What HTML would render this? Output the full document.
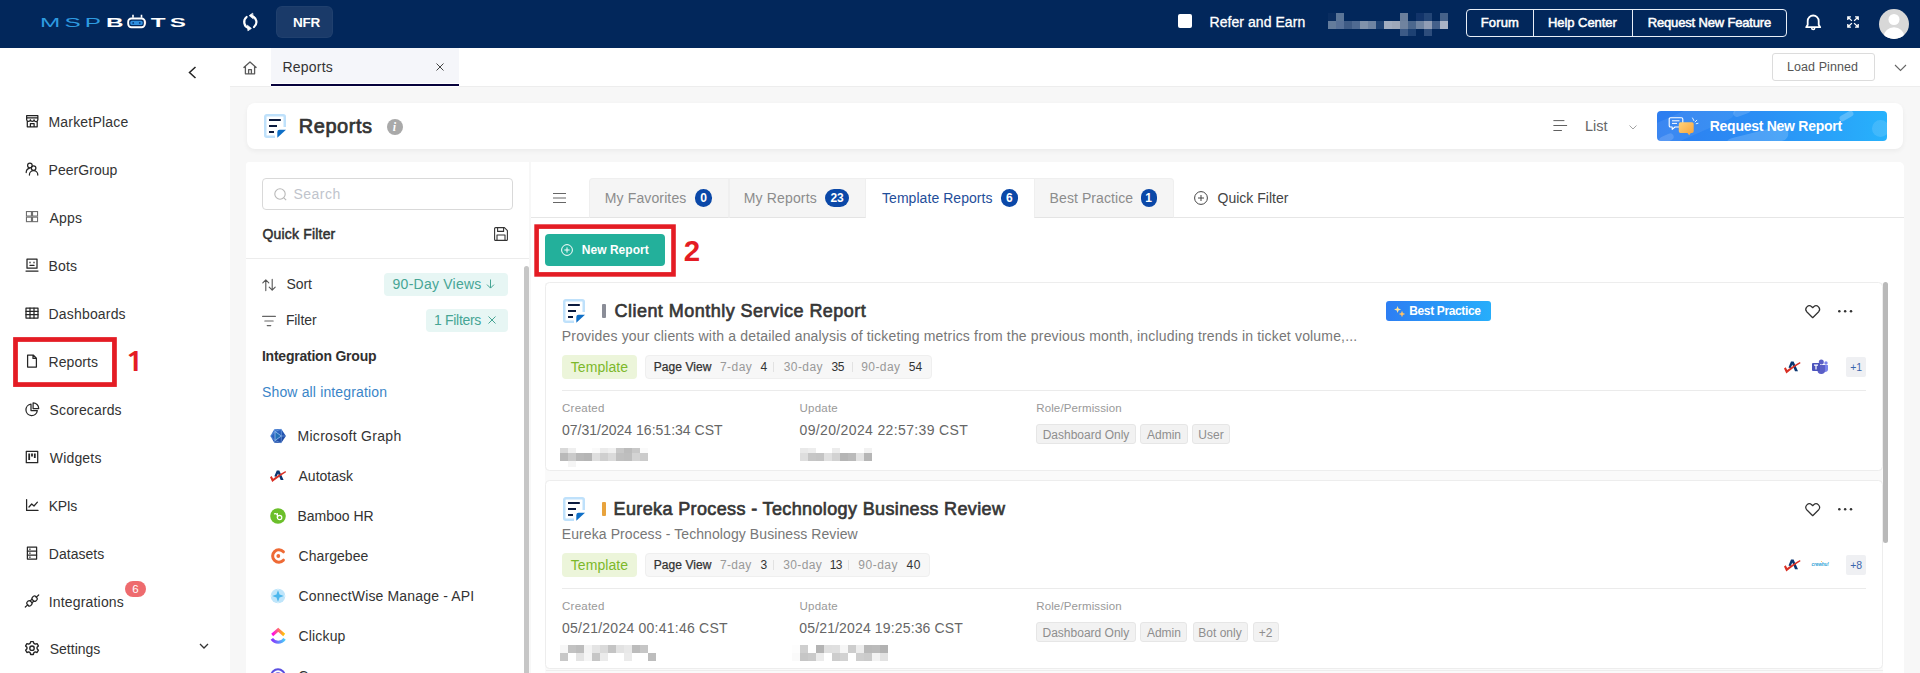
<!DOCTYPE html>
<html lang="en">
<head>
<meta charset="utf-8">
<title>Reports - MSPbots</title>
<style>
*{box-sizing:border-box;margin:0;padding:0}
html,body{width:1920px;height:673px;overflow:hidden;background:#f7f7f7;font-family:"Liberation Sans",sans-serif;color:#333}
.a{position:absolute}
.t{position:absolute;white-space:nowrap;line-height:20px;font-size:14px}
svg{display:block;overflow:visible}
/* top bar */
#top{left:0;top:0;width:1920px;height:48px;background:#02275b}
#top .t{color:#fff}
/* sidebar */
#side{left:0;top:48px;width:230px;height:625px;background:#fff}
#side .t{left:49px;color:#333;font-size:14px}
#side svg{position:absolute;left:25px}
/* tab bar */
#tabs{left:230px;top:48px;width:1690px;height:39px;background:#fff;border-bottom:1px solid #ededed}
/* title card */
#tcard{left:247px;top:103px;width:1656px;height:46px;background:#fff;border-radius:8px;box-shadow:0 2px 5px rgba(0,0,0,.05)}
/* filter panel */
#filter{left:246px;top:162px;width:283px;height:511px;background:#fff;border-radius:3px 0 0 0;overflow:hidden}
/* main panel */
#main{left:531px;top:162px;width:1373px;height:511px;background:#fff;border-radius:0 5px 0 0;overflow:hidden}

.card{background:#fff;border:1px solid #ededed;border-radius:4.500px}
.pv{font-size:12px}
.lb{font-size:11.500px;color:#999}
.dt{font-size:14px;color:#666}
.tg{height:19.500px;border-radius:3px;background:#f2f2f2;border:1px solid #e6e6e6}
.tgt{font-size:12px;color:#8e8e8e;text-align:center}
.mz i{position:absolute;width:8px;display:block}
</style>
</head>
<body>

<!-- ================= TOP BAR ================= -->
<div id="top" class="a">
  
  <div class="t" id="lg1" style="left:40.300px;top:13.400px;font-size:13.5px;color:#2e9be0;letter-spacing:2.3px;transform-origin:0 50%;transform:scaleX(1.8)">MSP</div>
  <div class="t" id="lg2" style="left:105.500px;top:13.400px;font-size:13.5px;font-weight:bold;color:#fff;letter-spacing:2.3px;transform-origin:0 50%;transform:scaleX(1.8)">BOTS</div>
  <svg class="a" style="left:126px;top:14px" width="21" height="15" viewBox="0 0 21 15"><path d="M7 .800v3M15.500.800v3" stroke="#fff" stroke-width="1.600" fill="none"/><rect x="2.200" y="4.500" width="16.600" height="8.800" rx="3.200" fill="#02275b" stroke="#fff" stroke-width="1.900"/><rect x="4.300" y="6.800" width="12.400" height="4.200" rx="1.600" fill="#2f8fdf"/><circle cx="7.200" cy="8.900" r=".9" fill="#0b3a7a"/><circle cx="13.800" cy="8.900" r=".9" fill="#0b3a7a"/></svg>

  
  <svg class="a" style="left:242px;top:13px" width="17" height="18" viewBox="0 0 17 18" fill="none" stroke="#fff" stroke-width="2.200" stroke-linecap="round">
    <path d="M4.600 4A6.300 6.300 0 0 0 6.800 15"/><path d="M5.600 12.400 9.400 15.400 6.200 17.600z" fill="#fff" stroke-width=".8" stroke-linejoin="round"/>
    <path d="M12 14A6.300 6.300 0 0 0 9.800 3"/><path d="M11 5.600 7.200 2.600 10.400.400z" fill="#fff" stroke-width=".8" stroke-linejoin="round"/>
  </svg>
  <div class="a" style="left:276px;top:6px;width:57px;height:32px;background:#1a3a69;border:1px solid #25447199;border-radius:6px"></div>
  <div class="t" id="nfr" style="left:293.00px;top:12.5px;font-weight:bold;font-size:13.5px;letter-spacing:-0.248px">NFR</div>

  
  <div class="a" style="left:1178px;top:14px;width:14px;height:14px;background:#fff;border-radius:2px"></div>
  <div class="t" id="refer" style="left:1209.60px;top:12px;font-size:14px;-webkit-text-stroke:.3px #fff;letter-spacing:0.049px">Refer and Earn</div>
  <div class="mz"><i style="left:1328px;top:13px;height:8px;background:#0a2d60"></i><i style="left:1336px;top:13px;height:8px;background:#5b7597"></i><i style="left:1400px;top:13px;height:8px;background:#6b7f9c"></i><i style="left:1416px;top:13px;height:8px;background:#12346a"></i><i style="left:1424px;top:13px;height:8px;background:#234576"></i><i style="left:1440px;top:13px;height:8px;background:#46628a"></i><i style="left:1328px;top:21px;height:8px;background:#647c9c"></i><i style="left:1336px;top:21px;height:8px;background:#587198"></i><i style="left:1344px;top:21px;height:8px;background:#3f5b85"></i><i style="left:1352px;top:21px;height:8px;background:#4f6a92"></i><i style="left:1360px;top:21px;height:8px;background:#8092ab"></i><i style="left:1368px;top:21px;height:8px;background:#6f84a2"></i><i style="left:1376px;top:21px;height:8px;background:#1d4173"></i><i style="left:1384px;top:21px;height:8px;background:#a2adc0"></i><i style="left:1392px;top:21px;height:8px;background:#9ea8ba"></i><i style="left:1400px;top:21px;height:8px;background:#70839f"></i><i style="left:1408px;top:21px;height:8px;background:#4b678d"></i><i style="left:1416px;top:21px;height:8px;background:#6f84a2"></i><i style="left:1424px;top:21px;height:8px;background:#909db5"></i><i style="left:1432px;top:21px;height:8px;background:#44608a"></i><i style="left:1440px;top:21px;height:8px;background:#a9b3c6"></i><i style="left:1400px;top:29px;height:7px;background:#3c5a86"></i><i style="left:1408px;top:29px;height:7px;background:#1d4173"></i><i style="left:1424px;top:29px;height:7px;background:#2d4d7c"></i></div>
  <div class="a" style="left:1466px;top:9px;width:321px;height:28px;border:1px solid #e8eef7;border-radius:4px"></div>
  <div class="a" style="left:1533px;top:9px;width:1px;height:28px;background:#e8eef7"></div>
  <div class="a" style="left:1632px;top:9px;width:1px;height:28px;background:#e8eef7"></div>
  <div class="t" id="forum" style="left:1480.75px;top:13px;font-size:13px;-webkit-text-stroke-width:.5px;letter-spacing:0.130px">Forum</div>
  <div class="t" id="help" style="left:1548.00px;top:13px;font-size:13px;-webkit-text-stroke-width:.5px;letter-spacing:-0.054px">Help Center</div>
  <div class="t" id="reqf" style="left:1647.75px;top:13px;font-size:13px;-webkit-text-stroke-width:.5px;letter-spacing:-0.165px">Request New Feature</div>
  <svg class="a" style="left:1804px;top:13px" width="18" height="18" viewBox="0 0 18 18" fill="none" stroke="#fff" stroke-width="1.800" stroke-linecap="round" stroke-linejoin="round">
    <path d="M2.200 14.200h14l-1.500-2.500V8a5.500 5.500 0 0 0-11 0v3.700z"/><path d="M7.700 15a1.500 1.500 0 0 0 3 0" stroke-width="1.500"/>
  </svg>
  <svg class="a" style="left:1847px;top:16.200px" width="12" height="12" viewBox="0 0 12 12" fill="none" stroke="#fff" stroke-width="1.300" stroke-linecap="square" stroke-linejoin="miter">
    <path d="M4.400 4.400 1.200 1.200M.800 3.300V.800h2.500M7.600 4.400l3.200-3.200M8.700.800h2.500v2.500M4.400 7.600 1.200 10.800M.800 8.700v2.500h2.500M7.600 7.600l3.200 3.200M11.200 8.700v2.500H8.700"/>
  </svg>
  <svg class="a" style="left:1879px;top:9px" width="30" height="30" viewBox="0 0 30 30"><defs><clipPath id="avc"><circle cx="15" cy="15" r="15"/></clipPath></defs>
    <circle cx="15" cy="15" r="15" fill="#d8d8d8"/><g clip-path="url(#avc)" fill="#fff"><circle cx="15" cy="10.500" r="5.500"/><ellipse cx="15" cy="27.300" rx="10.200" ry="9"/></g>
  </svg>

</div>

<!-- ================= SIDEBAR ================= -->
<div id="side" class="a">
    <svg style="top:66.900px;left:25.800px" width="12.500" height="12.500" viewBox="0 0 12.500 12.500"><g fill="none" stroke="#222" stroke-width="1.250" stroke-linejoin="round"><path d="M.650.650h11.200v2.300H.650zM.650 2.950v1.800a1.870 1.870 0 0 0 3.730 0 1.870 1.870 0 0 0 3.730 0 1.870 1.870 0 0 0 3.740 0V2.950M1.300 6.500v5.350h9.900V6.500M4.400 11.850V8.600h3.700v3.250"/></g></svg><div class="t" id="s_MarketPlace" style="left:48.50px;top:64px;letter-spacing:0.188px">MarketPlace</div>
  <svg style="top:114.4px" width="14" height="14" viewBox="0 0 14 14"><g fill="none" stroke="#262626" stroke-width="1.250" stroke-linejoin="round" stroke-linecap="round"><circle cx="4.900" cy="3.500" r="2.300"/><circle cx="8.600" cy="6.100" r="2.300"/><path d="M4.400 13a4.200 4.300 0 0 1 8.400 0"/><path d="M1.200 10.500a3.900 4.200 0 0 1 3.100-4.100"/></g></svg><div class="t" id="s_PeerGroup" style="left:48.50px;top:112px;letter-spacing:0.050px">PeerGroup</div>
  <svg style="top:162.4px" width="14" height="14" viewBox="0 0 14 14"><g fill="none" stroke="#6e6e6e" stroke-width="1.100"><rect x="1.450" y="1.550" width="5" height="4.500"/><rect x="7.550" y="1.550" width="5" height="4.500"/><rect x="1.450" y="7.150" width="5" height="4.500"/><rect x="7.550" y="7.150" width="5" height="4.500"/></g></svg><div class="t" id="s_Apps" style="left:49.40px;top:160px;letter-spacing:0.230px">Apps</div>
  <svg style="top:210.4px" width="14" height="14" viewBox="0 0 14 14"><g fill="none" stroke="#262626" stroke-width="1.250" stroke-linejoin="round" stroke-linecap="round"><rect x="2" y="1" width="10" height="9.200"/><path d="M1 13h12M5 4.200v.6M9 4.200v.6M5 7.400h4"/></g></svg><div class="t" id="s_Bots" style="left:48.60px;top:208px;letter-spacing:0.095px">Bots</div>
  <svg style="top:258.4px" width="14" height="14" viewBox="0 0 14 14"><g fill="none" stroke="#262626" stroke-width="1.250" stroke-linejoin="round" stroke-linecap="round"><rect x="1" y="2" width="12" height="10"/><path d="M1 5.300h12M1 8.700h12M5 2v10M9 2v10"/></g></svg><div class="t" id="s_Dashboards" style="left:48.60px;top:256px;letter-spacing:0.168px">Dashboards</div>
  <svg style="top:306.4px" width="14" height="14" viewBox="0 0 14 14"><g fill="none" stroke="#262626" stroke-width="1.250" stroke-linejoin="round" stroke-linecap="round"><path d="M2.600 1h5.600l3.200 3.200V13H2.600zM8 1.200v3.200h3.200"/></g></svg><div class="t" id="s_Reports" style="left:48.60px;top:304px;letter-spacing:0.063px">Reports</div>
  <svg style="top:354.4px" width="14" height="14" viewBox="0 0 14 14"><g fill="none" stroke="#262626" stroke-width="1.250" stroke-linejoin="round" stroke-linecap="round"><path d="M6 2.200A5.700 5.700 0 1 0 12.300 8.600H6z"/><path d="M8.100.900v5.600H13.700A5.600 5.600 0 0 0 8.100.900z"/></g></svg><div class="t" id="s_Scorecards" style="left:49.60px;top:352px;letter-spacing:0.133px">Scorecards</div>
  <svg style="top:402.4px" width="14" height="14" viewBox="0 0 14 14"><g fill="none" stroke="#262626" stroke-width="1.250" stroke-linejoin="round" stroke-linecap="round"><rect x="1.300" y="1.300" width="11.400" height="11.400"/><path d="M4.200 3.600v6.400M7 3.600v2.800M9.800 3.600v4.400" stroke-width="1.800" stroke-linecap="butt"/></g></svg><div class="t" id="s_Widgets" style="left:49.75px;top:400px;letter-spacing:0.180px">Widgets</div>
  <svg style="top:450.4px" width="14" height="14" viewBox="0 0 14 14"><g fill="none" stroke="#262626" stroke-width="1.250" stroke-linejoin="round" stroke-linecap="round"><path d="M1.600 1.600v10.800h11.400M4 9l2.700-3 2.300 2 3.400-3.800"/></g></svg><div class="t" id="s_KPIs" style="left:48.75px;top:448px;letter-spacing:-0.372px">KPIs</div>
  <svg style="top:498.4px" width="14" height="14" viewBox="0 0 14 14"><g fill="none" stroke="#262626" stroke-width="1.250" stroke-linejoin="round" stroke-linecap="round"><rect x="2.400" y="1" width="9.200" height="12"/><path d="M2.400 5h9.200M2.400 9h9.200M4.600 3h.6M4.600 7h.6M4.600 11h.6"/></g></svg><div class="t" id="s_Datasets" style="left:48.75px;top:496px;letter-spacing:0.043px">Datasets</div>
  <svg style="top:546.4px" width="14" height="14" viewBox="0 0 14 14"><g fill="none" stroke="#262626" stroke-width="1.250" stroke-linejoin="round" stroke-linecap="round"><g transform="rotate(-42 7 7)"><path d="M-2 7h3.200M12.800 7H16M5.800 5.700h2.400M5.800 8.300h2.400"/><rect x="1.200" y="4.500" width="4.600" height="5" rx="1.700"/><rect x="8.200" y="4.500" width="4.600" height="5" rx="1.700"/></g></g></svg><div class="t" id="s_Integrations" style="left:48.75px;top:544px;letter-spacing:0.172px">Integrations</div>
  <svg style="top:593.4px" width="14" height="14" viewBox="0 0 14 14"><g fill="none" stroke="#262626" stroke-width="1.250" stroke-linejoin="round" stroke-linecap="round"><g transform="translate(7 7.200) scale(1.1) translate(-7 -7)"><circle cx="7" cy="7" r="2"/><path d="M5.800 1h2.400l.5 1.600 1.300.7 1.600-.5 1.200 2.100-1.200 1.200v1.500l1.200 1.200-1.200 2.100-1.600-.5-1.300.7-.5 1.600H5.800l-.5-1.600-1.300-.7-1.600.5-1.200-2.100 1.200-1.200V6.100L1.200 4.900l1.200-2.100 1.600.5 1.300-.7z"/></g></g></svg><div class="t" id="s_Settings" style="left:49.75px;top:591px;letter-spacing:-0.005px">Settings</div>
  <svg style="left:188px;top:18px" width="9" height="13" viewBox="0 0 9 13" fill="none" stroke="#222" stroke-width="1.500"><path d="M7.500 1 1.500 6.500l6 5.500"/></svg>
  <svg style="left:199px;top:595px" width="10" height="7" viewBox="0 0 10 7" fill="none" stroke="#333" stroke-width="1.300"><path d="M1 1l4 4 4-4"/></svg>
  <div class="a" style="left:125px;top:533px;width:21px;height:16px;border-radius:8px;background:#ee6b6e"></div>
  <div class="t" style="left:125px;top:531px;width:21px;text-align:center;color:#fff;font-size:11.500px">6</div>

</div>

<!-- ================= TAB BAR ================= -->
<div id="tabs" class="a">
  
  <svg class="a" style="left:12px;top:12.400px" width="16" height="16" viewBox="0 0 16 16" fill="none" stroke="#5a5a5a" stroke-width="1.300" stroke-linejoin="round"><path d="M1.500 7.800 8 2l6.500 5.800M3.400 6.500v7.300h9.200V6.500M6.600 13.800V9.600h2.800v4.200"/></svg>
  <div class="a" style="left:41px;top:0;width:188px;height:35px;background:#f5f6fa"></div><div class="a" style="left:41px;top:36px;width:188px;height:2px;background:#07023c"></div><div class="a" style="left:41px;top:38px;width:188px;height:1px;background:#fff"></div>
  <div class="t" id="tabrep" style="left:52.40px;top:9px;font-size:14px;color:#333;letter-spacing:0.222px">Reports</div>
  <svg class="a" style="left:206px;top:15px" width="8" height="8" viewBox="0 0 8 8" fill="none" stroke="#444" stroke-width="1"><path d="M.500.500l7 7M7.500.500l-7 7"/></svg>
  <div class="a" style="left:1542px;top:5px;width:103px;height:28px;border:1px solid #dcdcdc;border-radius:3px;background:#fff"></div>
  <div class="t" id="loadp" style="left:1557.00px;top:9px;font-size:12.500px;color:#555;letter-spacing:0.075px">Load Pinned</div>
  <svg class="a" style="left:1664px;top:16px" width="13" height="8" viewBox="0 0 13 8" fill="none" stroke="#666" stroke-width="1.100"><path d="M1 1l5.500 5.500L12 1"/></svg>

</div>

<!-- ================= TITLE CARD ================= -->
<div id="tcard" class="a">
  
  <svg class="a" style="left:17px;top:11px" width="22" height="24" viewBox="0 0 22 24"><path d="M11 22.750H2.750a1.500 1.500 0 0 1-1.500-1.500V2.750a1.500 1.500 0 0 1 1.500-1.500h16.500a1.500 1.500 0 0 1 1.500 1.500V13" fill="none" stroke="#bfe1fb" stroke-width="2.500"/><path d="M5 6h11.800M5 12h8M5 18h5" stroke="#0b1b3f" stroke-width="2.200" fill="none"/><path d="M13.300 23.800V18a2.200 2.200 0 0 1 2.200-2.200H22z" fill="#0f6fc7"/></svg>
  <div class="t" id="ttl" style="left:51.80px;top:8px;font-size:20px;line-height:30px;color:#333;-webkit-text-stroke-width:.7px;letter-spacing:0.528px">Reports</div>
  <div class="a" style="left:139.500px;top:15.500px;width:16px;height:16px;border-radius:8px;background:#a9a9a9"></div>
  <div class="t" style="left:139.500px;top:13.500px;width:16px;text-align:center;font-family:'Liberation Serif',serif;font-style:italic;font-weight:bold;font-size:12px;color:#fff">i</div>
  <svg class="a" style="left:1306px;top:17px" width="14" height="12" viewBox="0 0 14 12" fill="none" stroke="#606060" stroke-width="1"><path d="M.400.600h11M.400 5.500h13.700M.400 10.500h8.500"/></svg>
  <div class="t" id="list" style="left:1338.00px;top:13px;font-size:14.500px;color:#666;letter-spacing:-0.012px">List</div>
  <svg class="a" style="left:1382px;top:21.600px" width="8" height="5" viewBox="0 0 8 5" fill="none" stroke="#999" stroke-width=".9"><path d="M.500.500 4 4 7.500.500"/></svg>
  <div class="a" style="left:1410px;top:8px;width:230px;height:30px;border-radius:4px;background:linear-gradient(90deg,#2d7df0 0%,#2b8ff5 45%,#27b2fc 100%);overflow:hidden">
    <div class="a" style="left:-14px;top:-2px;width:96px;height:26px;border-radius:13px;background:rgba(255,255,255,.07);transform:rotate(-24deg)"></div>
    <div class="a" style="left:68px;top:21px;width:64px;height:15px;border-radius:8px;background:rgba(255,255,255,.17);transform:rotate(-14deg)"></div>
    <div class="a" style="left:76px;top:-3px;width:18px;height:7px;border-radius:4px;background:rgba(255,255,255,.16);transform:rotate(-20deg)"></div>
    <div class="a" style="left:182px;top:2px;width:15px;height:6px;border-radius:3px;background:rgba(255,255,255,.24);transform:rotate(-30deg)"></div>
    <div class="a" style="left:215px;top:9px;width:17px;height:17px;border-radius:9px;background:rgba(255,255,255,.12)"></div>
    <div class="a" style="left:2px;top:24px;width:15px;height:7px;border-radius:4px;background:rgba(255,255,255,.15);transform:rotate(-25deg)"></div>
  </div>
  <svg class="a" style="left:1421px;top:13px" width="32" height="21" viewBox="0 0 32 21">
    <defs><linearGradient id="og" x1="0" y1="0" x2="1" y2="1"><stop offset="0" stop-color="#ffd27a"/><stop offset="1" stop-color="#f7a23a"/></linearGradient></defs>
    <path d="M2.500 1.800h11a1.300 1.300 0 0 1 1.300 1.300v6.600a1.300 1.300 0 0 1-1.300 1.300H7l-2.800 2.300V11H2.500a1.300 1.300 0 0 1-1.300-1.300V3.100a1.300 1.300 0 0 1 1.300-1.300z" fill="none" stroke="#fff" stroke-width="1.100" stroke-linejoin="round"/>
    <path d="M4 4.800h7.500M4 7.400h5" stroke="#fff" stroke-width="1" fill="none"/>
    <path d="M12.500 6.300h11.500a1.700 1.700 0 0 1 1.700 1.700v7.300a1.700 1.700 0 0 1-1.700 1.700h-1.200l-1.600 2.200-1.800-2.200h-6.900a1.700 1.700 0 0 1-1.700-1.700V8a1.700 1.700 0 0 1 1.700-1.700z" fill="url(#og)"/>
    <path d="M24.500 2l1.400 2.600M28.800 4.200l-1.700 1.700M30 7.300l-1.800.4" stroke="#dff1ff" stroke-width="1" stroke-linecap="round" fill="none"/>
  </svg>
  <div class="t" id="reqr" style="left:1462.75px;top:13px;font-size:14px;font-weight:bold;color:#fff;letter-spacing:-0.265px">Request New Report</div>

</div>

<!-- ================= FILTER PANEL ================= -->
<div id="filter" class="a">
  
  <div class="a" style="left:16px;top:16px;width:251px;height:32px;border:1px solid #d9d9d9;border-radius:4px"></div>
  <svg class="a" style="left:27.5px;top:25.5px" width="13" height="13" viewBox="0 0 13 13" fill="none" stroke="#b8b8b8" stroke-width="1.100"><circle cx="6" cy="6" r="5.200"/><path d="M9.800 9.800l2.400 2.400"/></svg>
  <div class="t" id="srch" style="left:47.40px;top:22px;color:#c0c4cc;letter-spacing:0.486px">Search</div>
  <div class="t" id="qf" style="left:16.50px;top:62px;color:#303030;-webkit-text-stroke-width:.5px;letter-spacing:0.180px">Quick Filter</div>
  <svg class="a" style="left:248px;top:65px" width="14" height="14" viewBox="0 0 14 14" fill="none" stroke="#333" stroke-width="1.100" stroke-linejoin="round"><path d="M1.600.600h8.800l3 3v8.800a1 1 0 0 1-1 1H1.600a1 1 0 0 1-1-1V1.600a1 1 0 0 1 1-1z"/><path d="M3.600.800v3.600h6V.800M3 13.200V8h8v5.200"/></svg>
  <div class="a" style="left:0;top:96px;width:283px;height:1px;background:#ececec"></div>
  <div class="a" style="left:278px;top:104px;width:5px;height:420px;background:#c6c6c6;border-radius:3px 3px 0 0"></div>

  <svg class="a" style="left:16px;top:115.5px" width="14" height="14" viewBox="0 0 14 14" fill="none" stroke="#555" stroke-width="1.100" stroke-linecap="round" stroke-linejoin="round"><path d="M3.800 12.600V1.800M.800 4.800l3-3 3 3M10.200 1.400v10.800M7.200 9.200l3 3 3-3"/></svg>
  <div class="t" id="sort" style="left:40.40px;top:112px;color:#333;letter-spacing:-0.062px">Sort</div>
  <div class="a" style="left:138px;top:110.5px;width:124px;height:23px;border-radius:4px;background:#e7f6f4"></div>
  <div class="t" id="v90" style="left:146.60px;top:112px;color:#46a594;letter-spacing:0.235px">90-Day Views</div>
  <svg class="a" style="left:240px;top:117px" width="9" height="10" viewBox="0 0 9 10" fill="none" stroke="#46a594" stroke-width="1"><path d="M4.500.500v8.500M1 5.600l3.500 3.500L8 5.600"/></svg>

  <svg class="a" style="left:16px;top:152.5px" width="14" height="12" viewBox="0 0 14 12" fill="none" stroke="#666" stroke-width="1.100" stroke-linecap="round"><path d="M.600 1.400h12.800M2.800 6h8.400M5.200 10.600h3.600"/></svg>
  <div class="t" id="filt" style="left:39.90px;top:148px;color:#333;letter-spacing:-0.090px">Filter</div>
  <div class="a" style="left:180px;top:146.5px;width:82px;height:23px;border-radius:4px;background:#e7f6f4"></div>
  <div class="t" id="f1" style="left:188.00px;top:148px;color:#46a594;letter-spacing:-0.311px">1 Filters</div>
  <svg class="a" style="left:241.5px;top:154px" width="8" height="8" viewBox="0 0 8 8" fill="none" stroke="#46a594" stroke-width="1"><path d="M.500.500l7 7M7.500.500l-7 7"/></svg>

  <div class="t" id="ig" style="left:15.90px;top:184px;font-weight:bold;color:#303030;letter-spacing:-0.223px">Integration Group</div>
  <div class="t" id="sai" style="left:16.00px;top:220px;color:#3a85c8;letter-spacing:0.147px">Show all integration</div>
  <svg class="a" style="left:24px;top:266px" width="16" height="16" viewBox="0 0 16 16"><defs><linearGradient id="msg" x1="0" y1="0" x2="1" y2="1"><stop offset="0" stop-color="#3f7fd8"/><stop offset=".5" stop-color="#2458b5"/><stop offset="1" stop-color="#1c3f94"/></linearGradient></defs><path d="M.400 8.100 4.300 1.200l7-.2L15.900 8l-4.700 7-6.900-.2z" fill="url(#msg)"/><path d="M5 3.500 11.400 8 5 12.500z" fill="#2471b8" stroke="#a9cdf7" stroke-width=".7" stroke-linejoin="round"/><path d="M5 3.500 4.300 1.200M5 3.500.400 8.100 5 12.500l-.7 2.300M5 12.500l6.200 2.500L11.400 8l4.500 0M11.400 8l-.1-7L5 3.500" stroke="#8db8ee" stroke-width=".5" fill="none"/></svg><div class="t" id="i0" style="left:51.50px;top:264px;color:#333;letter-spacing:0.293px">Microsoft Graph</div>
  <svg class="a" style="left:24px;top:306px" width="16" height="16" viewBox="0 0 16 16"><g transform="translate(0,2) scale(.97)"><path d="M4.500 6.500 7 .500h2.600L14 10.300h-3L8.300 3.600 6.600 7.300z" fill="#0a3570"/><path d="M0 7.600l1.700-1.300 1.500 2.800C7.500 6 11.800 3.200 16 1.100l.5 1.100C11.800 5.100 6.800 8.700 2.300 12.400z" fill="#d93025"/></g></svg><div class="t" id="i1" style="left:52.50px;top:304px;color:#333;letter-spacing:0.003px">Autotask</div>
  <svg class="a" style="left:24px;top:346px" width="16" height="16" viewBox="0 0 16 16"><circle cx="8" cy="8" r="7.800" fill="#6bbf2a"/><circle cx="9.600" cy="9.500" r="2.200" fill="none" stroke="#fff" stroke-width="1.200"/><path d="M7.400 9.800V5.500M7.400 7.300C6.800 6 5.600 5.500 4.500 5.800" stroke="#fff" stroke-width="1.200" fill="none" stroke-linecap="round"/></svg><div class="t" id="i2" style="left:51.50px;top:344px;color:#333;letter-spacing:-0.006px">Bamboo HR</div>
  <svg class="a" style="left:24px;top:386px" width="16" height="16" viewBox="0 0 16 16"><path d="M13.400 3.800A6.200 6.200 0 1 0 13.400 12.200" fill="none" stroke="#ee6a35" stroke-width="3" stroke-linecap="round"/><circle cx="8.300" cy="8" r="1.900" fill="#ee6a35"/></svg><div class="t" id="i3" style="left:52.50px;top:384px;color:#333;letter-spacing:0.076px">Chargebee</div>
  <svg class="a" style="left:24px;top:426px" width="16" height="16" viewBox="0 0 16 16"><circle cx="8" cy="8" r="7.300" fill="#bfe5fa"/><path d="M8 .500v15M.500 8h15" stroke="#eaf7fe" stroke-width="1.100"/><path d="M8 1.800 9.500 6.500 14.200 8 9.500 9.500 8 14.200 6.500 9.500 1.800 8 6.500 6.500z" fill="#4bb7ed"/></svg><div class="t" id="i4" style="left:52.50px;top:424px;color:#333;letter-spacing:0.159px">ConnectWise Manage - API</div>
  <svg class="a" style="left:24px;top:466px" width="16" height="16" viewBox="0 0 16 16"><defs><linearGradient id="cu1" x1="0" x2="1"><stop offset="0" stop-color="#ff02f0"/><stop offset="1" stop-color="#ffc800"/></linearGradient><linearGradient id="cu2" x1="0" x2="1"><stop offset="0" stop-color="#8930fd"/><stop offset="1" stop-color="#49ccf9"/></linearGradient></defs><path d="M2.200 7 8.200 1.800 14.200 7" fill="none" stroke="url(#cu1)" stroke-width="3" stroke-linejoin="miter"/><path d="M1.800 10.800c3.400 4.600 9.400 4.600 12.800 0" fill="none" stroke="url(#cu2)" stroke-width="3"/></svg><div class="t" id="i5" style="left:52.50px;top:464px;color:#333;letter-spacing:0.164px">Clickup</div>
  <svg class="a" style="left:24px;top:506px" width="16" height="16" viewBox="0 0 16 16"><circle cx="8" cy="8" r="6.800" fill="none" stroke="#5a4fe0" stroke-width="2"/><circle cx="8" cy="8" r="3" fill="none" stroke="#5a4fe0" stroke-width="1.600"/></svg><div class="t" id="i6" style="left:52.3px;top:504px;color:#333">Cove</div>

</div>

<!-- ================= MAIN PANEL ================= -->
<div id="main" class="a">
  <!--MAIN--><svg class="a" style="left:22px;top:31px" width="13" height="10" viewBox="0 0 13 10" fill="none" stroke="#666" stroke-width="1"><path d="M0 .500h13M0 5h13M0 9.500h13"/></svg>
<div class="a" style="left:0;top:55px;width:1373px;height:1px;background:#e6e6e6"></div>
<div class="a" style="left:58px;top:16px;width:140px;height:39.500px;background:#f5f5f5;border:1px solid #efefef;border-bottom:1px solid #e4e4e4;border-radius:4px 0 0 0"></div>
<div class="a" style="left:198px;top:16px;width:137px;height:39.500px;background:#f5f5f5;border:1px solid #efefef;border-bottom:1px solid #e4e4e4;border-radius:0"></div>
<div class="a" style="left:335px;top:16px;width:168px;height:40px;background:#fff;border-top:1px solid #eee"></div>
<div class="a" style="left:503px;top:16px;width:140px;height:39.500px;background:#f5f5f5;border:1px solid #efefef;border-bottom:1px solid #e4e4e4;border-radius:0 4px 0 0"></div>
<div class="t" id="tb1" style="left:73.80px;top:26px;color:#8c8c8c;letter-spacing:0.125px">My Favorites</div><div class="a" style="left:164px;top:27px;width:17px;height:18px;border-radius:9px;background:#0b48a8"></div><div class="t" id="bg1" style="left:164px;top:26px;width:17px;text-align:center;font-size:12px;font-weight:bold;color:#fff">0</div>
<div class="t" id="tb2" style="left:212.70px;top:26px;color:#8c8c8c;letter-spacing:0.159px">My Reports</div><div class="a" style="left:294px;top:27px;width:24.25px;height:18px;border-radius:9px;background:#0b48a8"></div><div class="t" id="bg2" style="left:294px;top:26px;width:24.25px;text-align:center;font-size:12px;font-weight:bold;color:#fff">23</div>
<div class="t" id="tb3" style="left:351.00px;top:26px;color:#1f4e9a;letter-spacing:0.052px">Template Reports</div><div class="a" style="left:469.75px;top:27px;width:17.25px;height:18px;border-radius:9px;background:#0b48a8"></div><div class="t" id="bg3" style="left:469.75px;top:26px;width:17.25px;text-align:center;font-size:12px;font-weight:bold;color:#fff">6</div>
<div class="t" id="tb4" style="left:518.60px;top:26px;color:#8c8c8c;letter-spacing:0.084px">Best Practice</div><div class="a" style="left:609.5px;top:27px;width:16.0px;height:18px;border-radius:9px;background:#0b48a8"></div><div class="t" id="bg4" style="left:609.5px;top:26px;width:16.0px;text-align:center;font-size:12px;font-weight:bold;color:#fff">1</div>
<svg class="a" style="left:663px;top:29px" width="14" height="14" viewBox="0 0 14 14" fill="none" stroke="#444" stroke-width="1"><circle cx="7" cy="7" r="6.400"/><path d="M7 4v6M4 7h6"/></svg><div class="t" id="tb5" style="left:686.50px;top:26px;color:#444;letter-spacing:0.011px">Quick Filter</div>
<div class="a" style="left:14px;top:72px;width:120px;height:32px;border-radius:4px;background:#23b09b"></div><svg class="a" style="left:30px;top:81.5px" width="12" height="12" viewBox="0 0 12 12" fill="none" stroke="#fff" stroke-width="1"><circle cx="6" cy="6" r="5.400"/><path d="M6 3.400v5.200M3.400 6h5.200"/></svg><div class="t" id="newr" style="left:50.75px;top:78px;font-size:12px;font-weight:bold;color:#fff;letter-spacing:0.036px">New Report</div>
<div class="a" style="left:1352.3px;top:120px;width:4.700px;height:261px;border-radius:2.500px;background:#b9b9b9"></div>
<div class="a" style="left:14px;top:121px;width:1338px;height:400px;background:#fafafa"></div><div class="a card" style="left:14px;top:120px;width:1337.500px;height:189.400px"></div>
<svg class="a" style="left:32.25px;top:137px" width="22" height="24" viewBox="0 0 22 24"><path d="M11 22.750H2.750a1.500 1.500 0 0 1-1.500-1.500V2.750a1.500 1.500 0 0 1 1.500-1.500h16.500a1.500 1.500 0 0 1 1.500 1.500V13" fill="none" stroke="#bfe1fb" stroke-width="2.500"/><path d="M5 6h11.800M5 12h8M5 18h5" stroke="#0b1b3f" stroke-width="2.200" fill="none"/><path d="M13.300 23.800V18a2.200 2.200 0 0 1 2.200-2.200H22z" fill="#0f6fc7"/></svg><div class="a" style="left:71px;top:142.25px;width:4px;height:14px;border-radius:1px;background:#8a8d97"></div><div class="t" id="ct0" style="left:83.50px;top:136px;font-size:18px;line-height:26px;color:#363636;-webkit-text-stroke-width:.65px;letter-spacing:0.470px">Client Monthly Service Report</div>
<div class="t" id="cd0" style="left:30.80px;top:163.6px;color:#777;letter-spacing:0.170px">Provides your clients with a detailed analysis of ticketing metrics from the previous month, including trends in ticket volume,...</div>
<div class="a" style="left:31px;top:193px;width:75px;height:24px;border-radius:4px;background:#ecf5da"></div><div class="t" id="tp0" style="left:39.75px;top:195px;color:#7cb82a;letter-spacing:0.068px">Template</div>
<div class="a" style="left:114px;top:193px;width:287px;height:24px;border-radius:4px;background:#f7f7f7;border:1px solid #efefef"></div><div class="t pv" id="pv0" style="left:122.75px;top:195px;color:#333;-webkit-text-stroke:.25px #333;letter-spacing:0.064px">Page View</div><div class="t pv" id="pl00" style="left:189.00px;top:195px;color:#999;letter-spacing:0.433px">7-day</div><div class="t pv" id="pn00" style="left:229.50px;top:195px;color:#333;letter-spacing:0.000px">4</div><div class="t pv" id="pl01" style="left:252.75px;top:195px;color:#999;letter-spacing:0.412px">30-day</div><div class="t pv" id="pn01" style="left:300.59px;top:195px;color:#333;letter-spacing:-0.600px">35</div><div class="t pv" id="pl02" style="left:330.25px;top:195px;color:#999;letter-spacing:0.412px">90-day</div><div class="t pv" id="pn02" style="left:377.75px;top:195px;color:#333;letter-spacing:0.076px">54</div><div class="a" style="left:242.25px;top:199.5px;width:1px;height:10.500px;background:#e2e2e2"></div><div class="a" style="left:320.5px;top:199.5px;width:1px;height:10.500px;background:#e2e2e2"></div>
<svg class="a" style="left:1253px;top:198.5px" width="17" height="13" viewBox="0 0 17 13"><path d="M4.500 6.500 7 .500h2.600L14 10.300h-3L8.300 3.600 6.600 7.300z" fill="#0a3570"/><path d="M0 7.600l1.700-1.300 1.500 2.800C7.500 6 11.800 3.200 16 1.100l.5 1.100C11.800 5.100 6.800 8.700 2.300 12.400z" fill="#d93025"/></svg><svg class="a" style="left:1281px;top:196.8px" width="16" height="15" viewBox="0 0 16 15"><circle cx="9.300" cy="3" r="2.500" fill="#5b5fc7"/><circle cx="14" cy="4" r="1.700" fill="#7b83eb"/><path d="M11.500 6h4a.5.500 0 0 1 .5.500v4a2.500 2.500 0 0 1-4.500 1.500z" fill="#7b83eb"/><path d="M5.500 6h7a.6.600 0 0 1 .6.600v4.600a3.800 3.800 0 0 1-7.600 0z" fill="#5b5fc7"/><rect x="0" y="4" width="8" height="8" rx="1" fill="#4b53bc"/><path d="M2 6.200h4M4 6.200v4.300" stroke="#fff" stroke-width="1.200" fill="none"/></svg><div class="a" style="left:1315.2px;top:195px;width:20px;height:20px;border-radius:2px;background:#eff0f3"></div><div class="t" id="mr0" style="left:1315.2px;top:195px;width:20px;text-align:center;font-size:10.500px;color:#3b66ad">+1</div>
<svg class="a" style="left:1273.75px;top:142.8px" width="15.400" height="13.400" viewBox="0 0 15.400 13.400" fill="none" stroke="#333" stroke-width="1.250" stroke-linejoin="round"><path d="M7.700 12.700 1.700 6.700a3.550 3.550 0 0 1 5-5l1 1 1-1a3.550 3.550 0 0 1 5 5z"/></svg><svg class="a" style="left:1306.8px;top:147.5px" width="15" height="3" viewBox="0 0 15 3" fill="#333"><circle cx="1.300" cy="1.300" r="1.250"/><circle cx="7.150" cy="1.300" r="1.250"/><circle cx="13" cy="1.300" r="1.250"/></svg>
<div class="a" style="left:31px;top:228px;width:1304px;height:1px;background:#ebebeb"></div>
<div class="t lb" id="l10" style="left:31.00px;top:236px;letter-spacing:0.247px">Created</div><div class="t lb" id="l20" style="left:268.50px;top:236px;letter-spacing:0.223px">Update</div><div class="t lb" id="l30" style="left:505.25px;top:236px;letter-spacing:0.119px">Role/Permission</div>
<div class="t dt" id="d10" style="left:31.00px;top:258px;letter-spacing:0.009px">07/31/2024 16:51:34 CST</div><div class="t dt" id="d20" style="left:268.50px;top:258px;letter-spacing:0.362px">09/20/2024 22:57:39 CST</div>
<div class="a tg" style="left:505.25px;top:262.25px;width:99.5px"></div><div class="t tgt" id="tg00" style="left:505.25px;top:262.6px;width:99.5px">Dashboard Only</div><div class="a tg" style="left:609.25px;top:262.25px;width:47.5px"></div><div class="t tgt" id="tg01" style="left:609.25px;top:262.6px;width:47.5px">Admin</div><div class="a tg" style="left:661.25px;top:262.25px;width:37.5px"></div><div class="t tgt" id="tg02" style="left:661.25px;top:262.6px;width:37.5px">User</div>
<div class="mz"><i style="left:29px;top:286px;height:5px;background:#d9d9d9"></i><i style="left:37px;top:286px;height:5px;background:#efefef"></i><i style="left:61px;top:286px;height:5px;background:#fafafa"></i><i style="left:69px;top:286px;height:5px;background:#ebebeb"></i><i style="left:77px;top:286px;height:5px;background:#f0f0f0"></i><i style="left:85px;top:286px;height:5px;background:#c8c8c8"></i><i style="left:93px;top:286px;height:5px;background:#bcbcbc"></i><i style="left:101px;top:286px;height:5px;background:#c8c8c8"></i><i style="left:109px;top:286px;height:5px;background:#fafafa"></i><i style="left:29px;top:291px;height:8px;background:#b9b9b9"></i><i style="left:37px;top:291px;height:8px;background:#cacaca"></i><i style="left:45px;top:291px;height:8px;background:#b8b8b8"></i><i style="left:53px;top:291px;height:8px;background:#b5b5b5"></i><i style="left:61px;top:291px;height:8px;background:#dedede"></i><i style="left:69px;top:291px;height:8px;background:#cfcfcf"></i><i style="left:77px;top:291px;height:8px;background:#dadada"></i><i style="left:85px;top:291px;height:8px;background:#c0c0c0"></i><i style="left:93px;top:291px;height:8px;background:#bebebe"></i><i style="left:101px;top:291px;height:8px;background:#d3d3d3"></i><i style="left:109px;top:291px;height:8px;background:#cbcbcb"></i><i style="left:37px;top:299px;height:6px;background:#f5f5f5"></i></div>
<div class="mz"><i style="left:269px;top:286px;height:5px;background:#e9e9e9"></i><i style="left:277px;top:286px;height:5px;background:#ededed"></i><i style="left:301px;top:286px;height:5px;background:#ececec"></i><i style="left:333px;top:286px;height:5px;background:#f2f2f2"></i><i style="left:269px;top:291px;height:8px;background:#dedede"></i><i style="left:277px;top:291px;height:8px;background:#c6c6c6"></i><i style="left:285px;top:291px;height:8px;background:#c4c4c4"></i><i style="left:293px;top:291px;height:8px;background:#e0e0e0"></i><i style="left:301px;top:291px;height:8px;background:#d2d2d2"></i><i style="left:309px;top:291px;height:8px;background:#b5b5b5"></i><i style="left:317px;top:291px;height:8px;background:#bababa"></i><i style="left:325px;top:291px;height:8px;background:#e3e3e3"></i><i style="left:333px;top:291px;height:8px;background:#b6b6b6"></i></div>
<div class="a" style="left:855.25px;top:139.25px;width:104.750px;height:19.250px;border-radius:3px;background:linear-gradient(90deg,#2d7ef3,#27aefb)"></div><svg class="a" style="left:863px;top:143.5px" width="11" height="11" viewBox="0 0 11 11"><path d="M3.600 0l.9 2.600 2.600.9-2.600.9L3.600 7l-.9-2.600L.100 3.500l2.600-.9z" fill="#ffe29a"/><path d="M8 4.800l.9 2.300 2.300.9-2.300.9L8 11.200l-.9-2.300-2.300-.9 2.300-.9z" fill="#ffc266"/></svg><div class="t" id="bpt" style="left:878.25px;top:139px;font-size:12px;font-weight:bold;color:#fff;letter-spacing:-0.364px">Best Practice</div>
<div class="a card" style="left:14px;top:318px;width:1337.500px;height:189.400px"></div>
<svg class="a" style="left:32.25px;top:335px" width="22" height="24" viewBox="0 0 22 24"><path d="M11 22.750H2.750a1.500 1.500 0 0 1-1.500-1.500V2.750a1.500 1.500 0 0 1 1.500-1.500h16.500a1.500 1.500 0 0 1 1.500 1.500V13" fill="none" stroke="#bfe1fb" stroke-width="2.500"/><path d="M5 6h11.800M5 12h8M5 18h5" stroke="#0b1b3f" stroke-width="2.200" fill="none"/><path d="M13.300 23.800V18a2.200 2.200 0 0 1 2.200-2.200H22z" fill="#0f6fc7"/></svg><div class="a" style="left:71px;top:340.25px;width:4px;height:14px;border-radius:1px;background:#e8a33d"></div><div class="t" id="ct1" style="left:82.60px;top:334px;font-size:18px;line-height:26px;color:#363636;-webkit-text-stroke-width:.65px;letter-spacing:0.369px">Eureka Process - Technology Business Review</div>
<div class="t" id="cd1" style="left:30.80px;top:361.6px;color:#777;letter-spacing:0.083px">Eureka Process - Technology Business Review</div>
<div class="a" style="left:31px;top:391px;width:75px;height:24px;border-radius:4px;background:#ecf5da"></div><div class="t" id="tp1" style="left:39.75px;top:393px;color:#7cb82a;letter-spacing:0.068px">Template</div>
<div class="a" style="left:114px;top:391px;width:284.5px;height:24px;border-radius:4px;background:#f7f7f7;border:1px solid #efefef"></div><div class="t pv" id="pv1" style="left:122.75px;top:393px;color:#333;-webkit-text-stroke:.25px #333;letter-spacing:0.064px">Page View</div><div class="t pv" id="pl10" style="left:189.00px;top:393px;color:#999;letter-spacing:0.308px">7-day</div><div class="t pv" id="pn10" style="left:229.40px;top:393px;color:#333;letter-spacing:0.000px">3</div><div class="t pv" id="pl11" style="left:252.30px;top:393px;color:#999;letter-spacing:0.342px">30-day</div><div class="t pv" id="pn11" style="left:298.71px;top:393px;color:#333;letter-spacing:-0.600px">13</div><div class="t pv" id="pl12" style="left:327.30px;top:393px;color:#999;letter-spacing:0.502px">90-day</div><div class="t pv" id="pn12" style="left:375.39px;top:393px;color:#333;letter-spacing:0.600px">40</div><div class="a" style="left:242.25px;top:397.5px;width:1px;height:10.500px;background:#e2e2e2"></div><div class="a" style="left:317.25px;top:397.5px;width:1px;height:10.500px;background:#e2e2e2"></div>
<svg class="a" style="left:1253px;top:396.5px" width="17" height="13" viewBox="0 0 17 13"><path d="M4.500 6.500 7 .500h2.600L14 10.300h-3L8.300 3.600 6.600 7.300z" fill="#0a3570"/><path d="M0 7.600l1.700-1.300 1.500 2.800C7.500 6 11.800 3.200 16 1.100l.5 1.100C11.800 5.100 6.800 8.700 2.300 12.400z" fill="#d93025"/></svg><div class="t" style="left:1280.5px;top:393px;font-size:4.700px;line-height:20px;font-style:italic;font-weight:bold;color:#2fa3d6;letter-spacing:-.1px">crewhu!</div><div class="a" style="left:1289.5px;top:398.5px;width:1.500px;height:1.500px;border-radius:1px;background:#f5b34a"></div><div class="a" style="left:1315.2px;top:393px;width:20px;height:20px;border-radius:2px;background:#eff0f3"></div><div class="t" id="mr1" style="left:1315.2px;top:393px;width:20px;text-align:center;font-size:10.500px;color:#3b66ad">+8</div>
<svg class="a" style="left:1273.75px;top:340.8px" width="15.400" height="13.400" viewBox="0 0 15.400 13.400" fill="none" stroke="#333" stroke-width="1.250" stroke-linejoin="round"><path d="M7.700 12.700 1.700 6.700a3.550 3.550 0 0 1 5-5l1 1 1-1a3.550 3.550 0 0 1 5 5z"/></svg><svg class="a" style="left:1306.8px;top:345.5px" width="15" height="3" viewBox="0 0 15 3" fill="#333"><circle cx="1.300" cy="1.300" r="1.250"/><circle cx="7.150" cy="1.300" r="1.250"/><circle cx="13" cy="1.300" r="1.250"/></svg>
<div class="a" style="left:31px;top:426px;width:1304px;height:1px;background:#ebebeb"></div>
<div class="t lb" id="l11" style="left:31.00px;top:434px;letter-spacing:0.247px">Created</div><div class="t lb" id="l21" style="left:268.50px;top:434px;letter-spacing:0.223px">Update</div><div class="t lb" id="l31" style="left:505.25px;top:434px;letter-spacing:0.119px">Role/Permission</div>
<div class="t dt" id="d11" style="left:31.00px;top:456px;letter-spacing:0.237px">05/21/2024 00:41:46 CST</div><div class="t dt" id="d21" style="left:268.30px;top:456px;letter-spacing:0.146px">05/21/2024 19:25:36 CST</div>
<div class="a tg" style="left:505.25px;top:460.25px;width:99.25px"></div><div class="t tgt" id="tg10" style="left:505.25px;top:460.6px;width:99.25px">Dashboard Only</div><div class="a tg" style="left:609.4px;top:460.25px;width:47.1px"></div><div class="t tgt" id="tg11" style="left:609.4px;top:460.6px;width:47.1px">Admin</div><div class="a tg" style="left:661.5px;top:460.25px;width:55.0px"></div><div class="t tgt" id="tg12" style="left:661.5px;top:460.6px;width:55.0px">Bot only</div><div class="a tg" style="left:721.5px;top:460.25px;width:26.25px"></div><div class="t tgt" id="tg13" style="left:721.5px;top:460.6px;width:26.25px">+2</div>
<div class="mz"><i style="left:29px;top:483px;height:8px;background:#f7f7f7"></i><i style="left:37px;top:483px;height:8px;background:#c2c2c2"></i><i style="left:45px;top:483px;height:8px;background:#bdbdbd"></i><i style="left:53px;top:483px;height:8px;background:#f3f3f3"></i><i style="left:61px;top:483px;height:8px;background:#e4e4e4"></i><i style="left:69px;top:483px;height:8px;background:#dadada"></i><i style="left:77px;top:483px;height:8px;background:#c4c4c4"></i><i style="left:85px;top:483px;height:8px;background:#e2e2e2"></i><i style="left:93px;top:483px;height:8px;background:#e8e8e8"></i><i style="left:101px;top:483px;height:8px;background:#bcbcbc"></i><i style="left:109px;top:483px;height:8px;background:#c6c6c6"></i><i style="left:29px;top:491px;height:8px;background:#c8c8c8"></i><i style="left:45px;top:491px;height:8px;background:#e4e4e4"></i><i style="left:53px;top:491px;height:8px;background:#f5f5f5"></i><i style="left:61px;top:491px;height:8px;background:#c6c6c6"></i><i style="left:69px;top:491px;height:8px;background:#ebebeb"></i><i style="left:93px;top:491px;height:8px;background:#ebebeb"></i><i style="left:117px;top:491px;height:8px;background:#bdbdbd"></i></div>
<div class="mz"><i style="left:261px;top:483px;height:8px;background:#fdfdfd"></i><i style="left:269px;top:483px;height:8px;background:#cfcfcf"></i><i style="left:285px;top:483px;height:8px;background:#b4b4b4"></i><i style="left:293px;top:483px;height:8px;background:#dfdfdf"></i><i style="left:301px;top:483px;height:8px;background:#e0e0e0"></i><i style="left:309px;top:483px;height:8px;background:#f6f6f6"></i><i style="left:317px;top:483px;height:8px;background:#cdcdcd"></i><i style="left:325px;top:483px;height:8px;background:#ededed"></i><i style="left:333px;top:483px;height:8px;background:#b9b9b9"></i><i style="left:341px;top:483px;height:8px;background:#bbbbbb"></i><i style="left:349px;top:483px;height:8px;background:#b2b2b2"></i><i style="left:261px;top:491px;height:8px;background:#fafafa"></i><i style="left:269px;top:491px;height:8px;background:#c6c6c6"></i><i style="left:277px;top:491px;height:8px;background:#cacaca"></i><i style="left:285px;top:491px;height:8px;background:#ececec"></i><i style="left:301px;top:491px;height:8px;background:#cdcdcd"></i><i style="left:309px;top:491px;height:8px;background:#d2d2d2"></i><i style="left:325px;top:491px;height:8px;background:#cecece"></i><i style="left:333px;top:491px;height:8px;background:#cbcbcb"></i><i style="left:341px;top:491px;height:8px;background:#f3f3f3"></i><i style="left:349px;top:491px;height:8px;background:#e2e2e2"></i></div>
<div class="a" style="left:14.5px;top:508px;width:1337px;height:10px;border-top:1px solid #eee"></div>
<!--/MAIN-->
</div>


<svg class="a" style="left:0;top:0" width="700" height="400" viewBox="0 0 700 400" fill="none" stroke="#e41c24"><rect x="15.500" y="339.500" width="98.950" height="45.050" stroke-width="4.750"/><rect x="536.600" y="226.600" width="136.900" height="47.800" stroke-width="4.600"/></svg>
<div class="t" id="n1" style="left:124.500px;top:344.600px;width:20px;text-align:center;font-size:26px;line-height:34px;font-weight:bold;color:#e41c24;font-family:NanumGothic,'Liberation Sans',sans-serif;transform:scaleX(1.35)">1</div>
<!--ANNOT2--><div class="t" id="n2" style="left:683.800px;top:234.300px;font-size:29.500px;line-height:34px;font-weight:bold;color:#e41c24">2</div><!--/ANNOT2-->

</body>
</html>
